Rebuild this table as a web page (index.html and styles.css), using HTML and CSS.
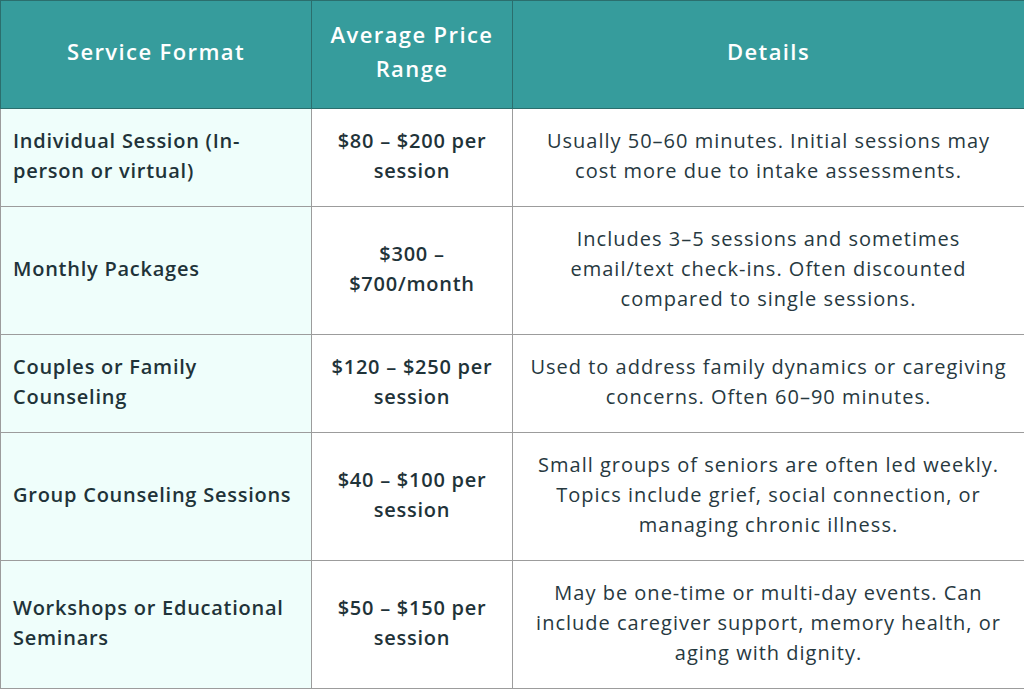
FILE: index.html
```html
<!DOCTYPE html>
<html lang="en">
<head>
<meta charset="utf-8">
<title>Senior Counseling Pricing</title>
<link rel="stylesheet" href="styles.css">
</head>
<body>
<table class="pricing">
  <colgroup>
    <col class="col-format">
    <col class="col-price">
    <col class="col-details">
  </colgroup>
  <thead>
    <tr>
      <th>Service Format</th>
      <th>Average Price Range</th>
      <th>Details</th>
    </tr>
  </thead>
  <tbody>
    <tr>
      <td class="format">Individual Session (In-person or virtual)</td>
      <td class="price">$80 – $200 per session</td>
      <td class="details">Usually 50–60 minutes. Initial sessions may cost more due to intake assessments.</td>
    </tr>
    <tr>
      <td class="format">Monthly Packages</td>
      <td class="price">$300 – $700/month</td>
      <td class="details">Includes 3–5 sessions and sometimes email/text check-ins. Often discounted compared to single sessions.</td>
    </tr>
    <tr>
      <td class="format">Couples or Family Counseling</td>
      <td class="price">$120 – $250 per session</td>
      <td class="details">Used to address family dynamics or caregiving concerns. Often 60–90 minutes.</td>
    </tr>
    <tr>
      <td class="format">Group Counseling Sessions</td>
      <td class="price">$40 – $100 per session</td>
      <td class="details">Small groups of seniors are often led weekly. Topics include grief, social connection, or managing chronic illness.</td>
    </tr>
    <tr>
      <td class="format">Workshops or Educational Seminars</td>
      <td class="price">$50 – $150 per session</td>
      <td class="details">May be one-time or multi-day events. Can include caregiver support, memory health, or aging with dignity.</td>
    </tr>
  </tbody>
</table>
</body>
</html>
```

FILE: styles.css
```css
html, body {
  margin: 0;
  padding: 0;
  background: #ffffff;
}

body {
  font-family: "Open Sans", "Noto Sans", sans-serif;
  color: #1f3339;
}

.pricing {
  width: 1024px;
  border-collapse: collapse;
  table-layout: fixed;
}

.col-format { width: 311px; }
.col-price { width: 201px; }
.col-details { width: 512px; }

.pricing th {
  background: #369c9c;
  color: #ffffff;
  font-weight: 600;
  font-size: 22px;
  letter-spacing: 1.4px;
  line-height: 34px;
  height: 68px;
  padding: 16px 10px 23px;
  border: 1px solid #2b6e6d;
  text-align: center;
  vertical-align: middle;
}

.pricing td {
  font-size: 20px;
  letter-spacing: 1px;
  line-height: 30px;
  padding: 17px 12px 20px;
  border: 1px solid #9c9c9c;
  vertical-align: middle;
}

.pricing .format {
  background: #effefb;
  font-weight: 600;
  letter-spacing: 0.75px;
  text-align: left;
}

.pricing .price {
  font-weight: 600;
  letter-spacing: 0.75px;
  text-align: center;
  padding-left: 14px;
  padding-right: 14px;
}

.pricing .details {
  font-weight: 400;
  text-align: center;
  color: #27393f;
  padding-left: 16px;
  padding-right: 16px;
}
```
